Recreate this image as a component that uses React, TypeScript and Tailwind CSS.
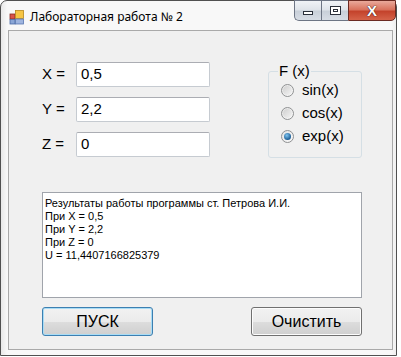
import React from "react";

function AppIcon() {
  return (
    <svg width="16" height="16" viewBox="0 0 16 16">
      <rect x="1" y="5" width="5" height="5" fill="#d9534a" stroke="#8a2b22" strokeWidth="0.8" />
      <rect x="6.5" y="1.5" width="8" height="8" fill="#f6c543" stroke="#b7871a" strokeWidth="0.8" />
      <rect x="1" y="10.5" width="5" height="4.5" fill="#8aa6d6" stroke="#4a6aa6" strokeWidth="0.8" />
      <rect x="6.5" y="10" width="8" height="5" fill="#9fb5df" stroke="#5877b0" strokeWidth="0.8" />
    </svg>
  );
}

function Radio({ checked, label }: { checked?: boolean; label: string }) {
  return (
    <div className="flex items-center h-[23px]">
      <div className="w-[13px] h-[13px] rounded-full border border-[#8f9192] bg-gradient-to-br from-[#e4e4e4] to-[#fafafa] flex items-center justify-center">
        {checked ? (
          <div className="w-[7px] h-[7px] rounded-full bg-[radial-gradient(circle_at_40%_35%,#7fc4f0,#1b5d94_70%)]" />
        ) : (
          <div className="w-[9px] h-[9px] rounded-full bg-gradient-to-br from-[#d0d0d0] to-[#f4f4f4]" />
        )}
      </div>
      <span className="ml-[8px] text-[15px] text-black">{label}</span>
    </div>
  );
}

function Field({ label, value }: { label: string; value: string }) {
  return (
    <div className="flex items-center h-[25px]">
      <span className="w-[34px] text-[15px] text-black">{label}</span>
      <div className="w-[134px] h-[25px] bg-white border border-[#c6cbd1] border-t-[#abadb3] rounded-[2px] flex items-center pl-[4px] text-[15px] text-black">
        {value}
      </div>
    </div>
  );
}

function Button({ label, focused }: { label: string; focused?: boolean }) {
  return (
    <div
      className={
        "w-[111px] h-[29px] rounded-[3px] border flex items-center justify-center text-[16px] text-black bg-[linear-gradient(#f2f2f2_0%,#ebebeb_50%,#dddddd_51%,#cfcfcf_100%)] " +
        (focused
          ? "border-[#3c7fb1] shadow-[inset_0_0_0_1px_#a8dcf5]"
          : "border-[#707070] shadow-[inset_0_0_0_1px_#fcfcfc]")
      }
    >
      {label}
    </div>
  );
}

export default function App() {
  return (
    <div className="w-[401px] h-[357px] bg-white relative overflow-hidden" style={{ fontFamily: '"Liberation Sans", Arial, sans-serif' }}>
      <div className="w-[397px] h-[356px] border border-[#505050] rounded-t-[7px] bg-[linear-gradient(90deg,#e8e8e8_0px,#f8f8f8_6px,#f8f8f8_390px,#ececec_397px)] flex flex-col">
        {/* title bar */}
        <div className="h-[29px] flex items-start relative">
          <div className="flex items-center mt-[7px] ml-[8px]">
            <AppIcon />
            <span className="ml-[5px] text-[12px] text-black" style={{ fontFamily: '"Noto Sans", "Open Sans", sans-serif' }}>
              Лабораторная работа № 2
            </span>
          </div>
          <div className="absolute right-[0px] top-[-1px] flex h-[21px]">
            <div className="w-[27px] h-[21px] border border-[#6d7584] border-r-0 rounded-bl-[5px] bg-[linear-gradient(#f0f3f7_0%,#dfe4ea_45%,#c9d0d9_55%,#d7dde5_100%)] flex items-center justify-center">
              <div className="w-[10px] h-[4px] border border-[#2a2f3a] bg-white mt-[5px]" />
            </div>
            <div className="w-[27px] h-[21px] border border-[#6d7584] border-r-0 bg-[linear-gradient(#f0f3f7_0%,#dfe4ea_45%,#c9d0d9_55%,#d7dde5_100%)] flex items-center justify-center">
              <div className="w-[11px] h-[9px] border border-[#2a2f3a] bg-white flex items-center justify-center">
                <div className="w-[5px] h-[3px] border border-[#2a2f3a]" />
              </div>
            </div>
            <div className="w-[48px] h-[21px] border border-[#6b2a22] rounded-br-[5px] bg-[linear-gradient(#e9a99b_0%,#d9735e_45%,#c4432c_55%,#d5634a_100%)] flex items-center justify-center">
              <span className="text-white font-bold text-[15px] leading-none" style={{ textShadow: "0 0 1px #3a1010, 0 0 1px #3a1010" }}>
                X
              </span>
            </div>
          </div>
        </div>
        {/* client area */}
        <div className="ml-[7px] w-[385px] h-[320px] border border-[#a9a9a9] bg-[#f0f0f0] pl-[33px] pt-[31px] pr-[30px] flex flex-col">
          <div className="flex justify-between items-start">
            <div className="flex flex-col gap-[10px]">
              <Field label="X =" value="0,5" />
              <Field label="Y =" value="2,2" />
              <Field label="Z =" value="0" />
            </div>
            <div className="relative mt-[9px] w-[94px] h-[87px] border border-[#d5dfe5] rounded-[3px] mr-[0px] pl-[12px] pt-[7px]">
              <span className="absolute left-[9px] top-[-9px] bg-[#f0f0f0] px-[1px] text-[15px] leading-[16px] text-black">F (x)</span>
              <Radio label="sin(x)" />
              <Radio label="cos(x)" />
              <Radio checked label="exp(x)" />
            </div>
          </div>
          <div className="mt-[34px] h-[106px] bg-white border border-[#a0a4ab] pl-[2px] pt-[4px] text-[11px] leading-[13px] text-black">
            <div>Результаты работы программы ст. Петрова И.И.</div>
            <div>При X = 0,5</div>
            <div>При Y = 2,2</div>
            <div>При Z = 0</div>
            <div>U = 11,4407166825379</div>
          </div>
          <div className="mt-[9px] flex justify-between">
            <Button label="ПУСК" focused />
            <Button label="Очистить" />
          </div>
        </div>
      </div>
    </div>
  );
}
